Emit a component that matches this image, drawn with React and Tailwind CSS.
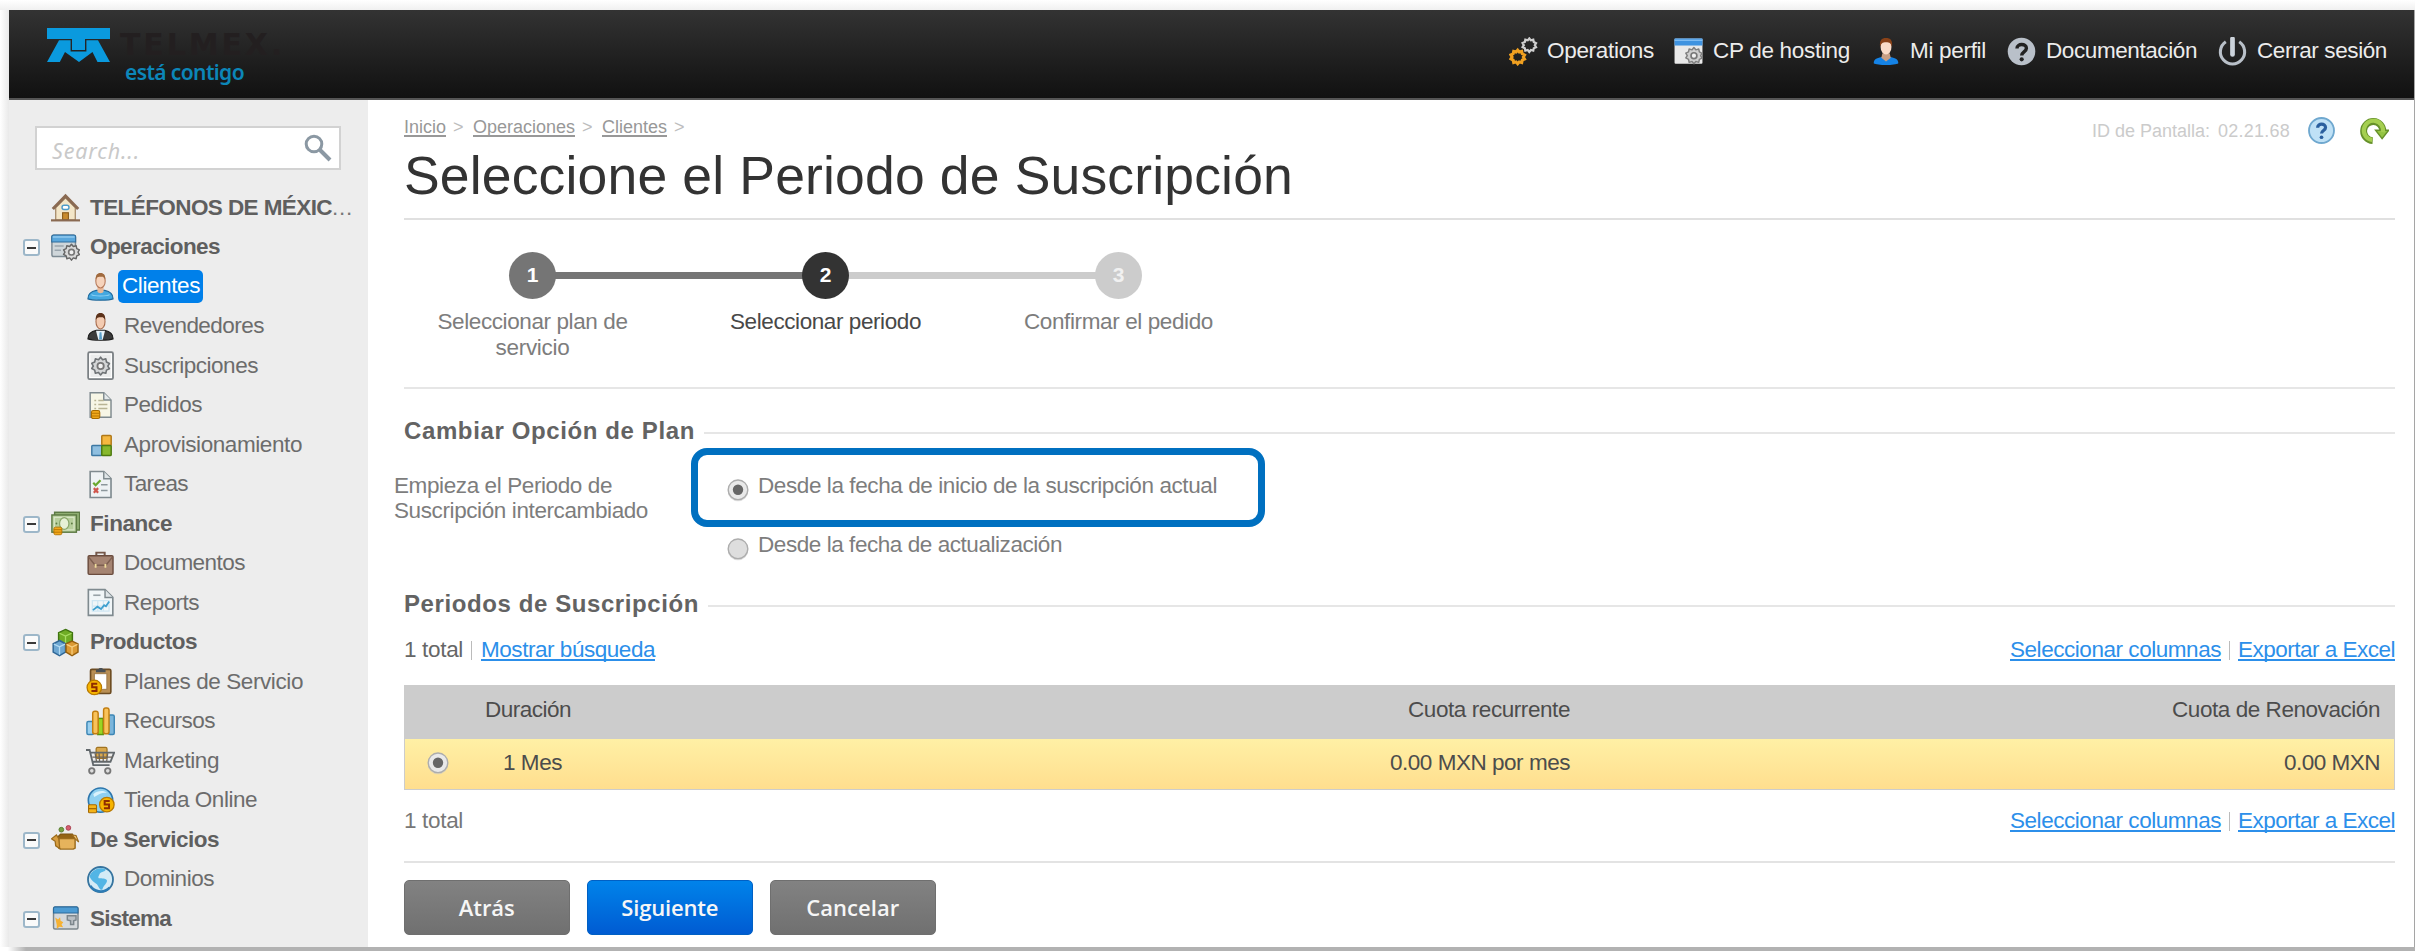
import React, { useLayoutEffect, useRef } from "react";

/* Text whose tracking is adjusted so that it fills the width of its box. */
function Fit({ className = "", inner = "", children }) {
  const box = useRef(null);
  const text = useRef(null);
  useLayoutEffect(() => {
    const el = text.current;
    el.style.letterSpacing = "0px";
    const natural = el.getBoundingClientRect().width;
    const target = box.current.getBoundingClientRect().width;
    el.style.letterSpacing = (target - natural) / children.length + "px";
  }, [children]);
  return (
    <span ref={box} className={"block shrink-0 whitespace-nowrap " + className}>
      <span ref={text} className={"inline-block " + inner}>{children}</span>
    </span>
  );
}

const Svg = ({ children, className = "size-[29px]" }) => (
  <svg viewBox="0 0 16 16" className={"block shrink-0 " + className} fill="none">{children}</svg>
);

const gearPath =
  "M0-3.9L.9-2.8 2.3-3.2 2.6-1.8 3.9-1.1 3.2 0 3.9 1.2 2.6 1.8 2.3 3.2 .9 2.8 0 3.9-.9 2.8-2.3 3.2-2.6 1.8-3.9 1.1-3.2 0-3.9-1.2-2.6-1.8-2.3-3.2-.9-2.8Z";

const Gear = ({ x, y, s = 1, fill = "#d9d9d9", stroke = "#666", hole = "#777", w = 0.7 }) => (
  <g transform={`translate(${x} ${y}) scale(${s})`}>
    <path d={gearPath} fill={fill} stroke={stroke} strokeWidth={w} strokeLinejoin="round" />
    <circle r="1.4" fill="#f1f1f1" stroke={hole} strokeWidth="0.8" />
  </g>
);

const Coin = ({ x, y, r = 4 }) => (
  <g>
    <circle cx={x} cy={y} r={r} fill="#f7b500" stroke="#b97a00" strokeWidth="0.7" />
    <path d={`M${x + 1.6} ${y - 2}h-2.8v1.9h2.4v2.1h-2.8`} stroke="#8f2c00" strokeWidth="1.1" />
  </g>
);

const icons = {
  house: (
    <Svg>
      <path d="M2.6 8v7h10.8V8L8 2.6Z" fill="#f3e6c8" stroke="#a58a68" strokeWidth="0.7" />
      <path d="M1 8.8 8 1.6l7 7.2" stroke="#8a6a52" strokeWidth="1.7" />
      <rect x="6.1" y="6.8" width="3.8" height="2.3" rx="1.1" fill="#fff" stroke="#4e9cc9" strokeWidth="0.8" />
      <rect x="6.4" y="10.9" width="3.2" height="3.8" fill="#c98b2d" stroke="#8a5a17" strokeWidth="0.6" />
      <path d="M0 15.1h16" stroke="#8a6a52" strokeWidth="1.2" />
    </Svg>
  ),
  operations: (
    <Svg>
      <rect x="0.5" y="1.2" width="13" height="11.8" rx="1" fill="#cfd6da" stroke="#7d8a93" strokeWidth="0.8" />
      <path d="M.4 5V2.1a1 1 0 0 1 1-1h11.2a1 1 0 0 1 1 1V5Z" fill="#5aa7dc" stroke="#2f6d9c" strokeWidth="0.6" />
      <path d="M1 2.2h12" stroke="#9bd0f3" strokeWidth="0.7" />
      <path d="M2 7.2h5M2 9.5h3.5" stroke="#9aa5ad" strokeWidth="0.9" />
      <Gear x="11.3" y="10.6" s="1.12" />
    </Svg>
  ),
  client: (
    <Svg>
      <path d="M1.1 14.8c0-3 1.6-4 4.6-4.6h4.6c3 .6 4.6 1.6 4.6 4.6-2 1-11.8 1-13.8 0Z" fill="#44a8e0" stroke="#20699c" strokeWidth="0.7" />
      <path d="M6.3 8v2.8c.5 1.2 2.9 1.2 3.4 0V8Z" fill="#eab998" />
      <ellipse cx="8" cy="4.9" rx="2.6" ry="3.9" fill="#f6d3bb" stroke="#b5795a" strokeWidth="0.6" />
      <path d="M5.4 4.2C5.2 1.6 6.2.5 8 .5s2.8 1.1 2.6 3.7C10 2.6 9 2.6 8 2.6s-2 0-2.6 1.6Z" fill="#a06a3e" />
      <path d="M3 12.5c1.5 1 8.5 1 10 0" stroke="#8fd2f5" strokeWidth="0.6" />
    </Svg>
  ),
  reseller: (
    <Svg>
      <path d="M1.1 14.8c0-3 1.6-4 4.6-4.6h4.6c3 .6 4.6 1.6 4.6 4.6-2 1-11.8 1-13.8 0Z" fill="#3b3b3b" stroke="#1c1c1c" strokeWidth="0.7" />
      <path d="M5.5 10.3 6.8 15.3h2.4L10.5 10.3Z" fill="#e8f2f8" />
      <path d="M7.5 11.2h1l.4 4h-1.7Z" fill="#5b9fc9" />
      <ellipse cx="8" cy="5.2" rx="2.5" ry="4.2" fill="#f3cbb1" stroke="#a66a4b" strokeWidth="0.6" />
      <path d="M5.4 4.5C5.2 1.6 6.2.5 8 .5s2.8 1.1 2.6 4C10 2.9 9 2.9 8 2.9s-2 0-2.6 1.6Z" fill="#5b3119" />
    </Svg>
  ),
  subscription: (
    <Svg>
      <rect x="1.2" y="0.7" width="13.7" height="14.8" rx="0.8" fill="#ebecec" stroke="#7b8084" strokeWidth="1" />
      <rect x="2.1" y="1.6" width="11.9" height="13" fill="none" stroke="#fff" strokeWidth="0.6" />
      <Gear x="8.05" y="8.3" s="1.25" fill="#d4d6d7" stroke="#6f7376" />
    </Svg>
  ),
  order: (
    <Svg>
      <path d="M2.3 1h7.5l4 4v9.5H2.3Z" fill="#f7f6e6" stroke="#7f8a8f" strokeWidth="0.8" />
      <path d="M9.8 1v4h4" fill="#e4e9eb" stroke="#7f8a8f" strokeWidth="0.8" />
      <path d="M4.6 5.2h1M4.6 7.5h1M4.6 9.7h1M6.8 5.2h3M6.8 7.5h5M6.8 9.7h5" stroke="#b8b494" strokeWidth="0.8" />
      <rect x="3" y="10.8" width="4.6" height="4.4" rx="1" fill="#f0a81c" stroke="#a66a00" strokeWidth="0.6" />
      <path d="M3 12.3h4.6M3 13.8h4.6" stroke="#b37400" strokeWidth="0.5" />
    </Svg>
  ),
  blocks: (
    <Svg>
      <rect x="8.7" y="3" width="5.2" height="5.6" rx="0.5" fill="#f5b840" stroke="#b07818" strokeWidth="0.8" />
      <rect x="3.2" y="8.5" width="5.5" height="5.6" rx="0.5" fill="#8fbfe0" stroke="#3d78a3" strokeWidth="0.8" />
      <rect x="8.7" y="8.5" width="5.2" height="5.6" rx="0.5" fill="#87b82d" stroke="#4d7a10" strokeWidth="0.8" />
    </Svg>
  ),
  tasks: (
    <Svg>
      <path d="M2.3.8h7.5l4 4v10.4H2.3Z" fill="#eef2f4" stroke="#7f8a8f" strokeWidth="0.9" />
      <path d="M9.8.8v4h4" fill="#dfe5e8" stroke="#7f8a8f" strokeWidth="0.8" />
      <path d="m4 7 1.3 1.4L8 5.6" stroke="#69a82c" strokeWidth="1.2" />
      <path d="m4.3 10 2.4 2.5m0-2.5-2.4 2.5" stroke="#d0564c" strokeWidth="1.2" />
      <path d="M8.3 8.1h3.6M8.3 11.3h3.6" stroke="#8c979c" strokeWidth="0.8" />
    </Svg>
  ),
  money: (
    <Svg>
      <rect x="2" y="1.8" width="13.8" height="9.8" fill="#8fae72" stroke="#5c7a43" strokeWidth="0.8" />
      <rect x="0.5" y="3.3" width="13.5" height="9.5" fill="#b7cf9c" stroke="#5c7a43" strokeWidth="0.8" />
      <rect x="1.8" y="4.6" width="10.9" height="6.9" fill="none" stroke="#dbe8cb" strokeWidth="0.6" />
      <ellipse cx="7.3" cy="8" rx="2.6" ry="3.3" fill="#e7f0d6" stroke="#8aa76c" strokeWidth="0.7" />
      <circle cx="3" cy="8" r="0.5" fill="#5c7a43" />
      <circle cx="11.5" cy="8" r="0.5" fill="#5c7a43" />
      <rect x="1.6" y="10" width="4.4" height="4.2" rx="0.9" fill="#f4a81a" stroke="#b37400" strokeWidth="0.5" />
      <path d="M1.6 11.4H6M1.6 12.8H6" stroke="#b37400" strokeWidth="0.5" />
    </Svg>
  ),
  briefcase: (
    <Svg>
      <path d="M5.7 4V2h4.6v2" stroke="#75584a" strokeWidth="1.1" />
      <rect x="1.2" y="3.7" width="13.7" height="10.3" rx="0.6" fill="#a58472" stroke="#6b4c3e" strokeWidth="0.8" />
      <path d="M1.5 4.5 5 9h6l3.5-4.5" stroke="#7d5f50" strokeWidth="0.8" />
      <path d="M5.3 8.3v2M10.7 8.3v2" stroke="#f0dc9b" strokeWidth="1" />
    </Svg>
  ),
  report: (
    <Svg>
      <path d="M1.3.9h9.2l4.3 4.3v9.9H1.3Z" fill="#f1f6f8" stroke="#7f8a8f" strokeWidth="0.9" />
      <path d="M10.5.9v4.3h4.3" fill="#dfe5e8" stroke="#7f8a8f" strokeWidth="0.8" />
      <path d="M4 4h4" stroke="#98a3a8" strokeWidth="0.9" />
      <path d="M3.5 7h9.2v5.8H3.5ZM6.5 7v5.8M9.6 7v5.8M3.5 10h9.2" stroke="#cfe6f2" strokeWidth="0.7" />
      <path d="m3.8 12.2 2.5-1.9 2 1.3L10 9.5l1 .6 1.8-2.7" stroke="#3fa0cf" strokeWidth="1" />
    </Svg>
  ),
  products: (
    <Svg>
      <path d="m8 .8 3.8 1.8v4.6L8 9 4.2 7.2V2.6Z" fill="#6fac25" stroke="#3f7410" strokeWidth="0.8" />
      <path d="m4.7 2.9 3.3 1.5 3.3-1.5M8 4.4V8.5" stroke="#a8dd63" strokeWidth="0.7" />
      <path d="m4.7 6.9 3.3 1.8v4.6l-3.3 2-3.5-2V8.7Z" fill="#6da7d2" stroke="#2f6797" strokeWidth="0.8" />
      <path d="m1.6 8.9 3.1 1.5 3-1.5M4.7 10.4v4.4" stroke="#b2daf2" strokeWidth="0.7" />
      <path d="m11.6 7.2 3.3 1.6v4.5l-3.3 2L8.3 13.3V8.8Z" fill="#dc9a34" stroke="#96600f" strokeWidth="0.8" />
      <path d="m8.6 9 3 1.5 3-1.5M11.6 10.5v4.3" stroke="#f8cf80" strokeWidth="0.7" />
    </Svg>
  ),
  plans: (
    <Svg>
      <rect x="2.5" y="1.3" width="11.2" height="13.3" rx="0.8" fill="#b98f55" stroke="#6d4c22" strokeWidth="0.9" />
      <rect x="4.6" y="3.7" width="6.9" height="8.6" fill="#fff" stroke="#9c7746" strokeWidth="0.5" />
      <path d="M5.5 2.9V1.4h1.4C7 .3 9.3.3 9.4 1.4h1.4v1.5Z" fill="#4a5055" />
      <Coin x={4.6} y={11.3} />
    </Svg>
  ),
  resources: (
    <Svg>
      <rect x="0.5" y="8" width="3.7" height="7.2" rx="0.8" fill="#9bd0ef" stroke="#3d86b5" strokeWidth="0.8" />
      <rect x="6.5" y="6.3" width="3" height="8.9" fill="#9bd522" stroke="#5b9410" strokeWidth="0.8" />
      <rect x="12.4" y="4.4" width="3.2" height="10.8" rx="0.8" fill="#7bb5db" stroke="#3d86b5" strokeWidth="0.8" />
      <rect x="3.7" y="2.3" width="3" height="12.5" rx="1.2" fill="#f9c25a" stroke="#c27e10" strokeWidth="0.8" />
      <rect x="9.7" y="0.6" width="3" height="14.2" rx="1.2" fill="#f9c25a" stroke="#c27e10" strokeWidth="0.8" />
    </Svg>
  ),
  cart: (
    <Svg>
      <rect x="5.6" y="0.8" width="6" height="6" rx="0.8" fill="#d9a84c" stroke="#a17320" strokeWidth="0.7" />
      <path d="M0 2.2h2l2 8.3h9M2.7 3.7h12.8l-2 5H4" stroke="#62686c" strokeWidth="1" />
      <path d="M5 4l.8 4.5M7.2 4l.3 4.5M9.5 4v4.5M12 4l-.6 4.5M3.5 6.2h11" stroke="#6e655a" strokeWidth="0.7" />
      <circle cx="3.2" cy="13.7" r="1.5" fill="#ddd" stroke="#777" strokeWidth="1" />
      <circle cx="12" cy="13.7" r="1.5" fill="#ddd" stroke="#777" strokeWidth="1" />
    </Svg>
  ),
  store: (
    <Svg>
      <circle cx="8" cy="7.8" r="6.7" fill="#8fd0f0" stroke="#2c76ad" strokeWidth="0.9" />
      <path d="M4 4.500c2-2 6-2.300 7.500-.8-3-.3-4.500 1-7 2.300Z" fill="#d9f2fc" />
      <rect x="1.4" y="10.3" width="4.4" height="4.5" rx="0.6" fill="#f4b41a" stroke="#a66a00" strokeWidth="0.6" />
      <path d="M1.4 12.5h4.4" stroke="#a66a00" strokeWidth="0.7" />
      <Coin x={11.5} y={10.3} />
    </Svg>
  ),
  services: (
    <Svg>
      <circle cx="5.7" cy="2.6" r="1.3" fill="#76a044" stroke="#55792b" strokeWidth="0.5" />
      <circle cx="9.6" cy="1.6" r="1.3" fill="#d65f70" stroke="#a83e4e" strokeWidth="0.5" />
      <path d="M2.8 7.5 5.3 5h6.5l1.4 2.5Z" fill="#946416" stroke="#7a5210" strokeWidth="0.6" />
      <path d="M4.3 7.5h9v5.2l-1 .6h-7l-1-.6Z" fill="#e6b35c" stroke="#9c6c1c" strokeWidth="0.8" />
      <path d="M4.3 7.5 3 5.5.3 7.6l2 1.4.3 2.5 2.2 1.5Z" fill="#d79e41" stroke="#9c6c1c" strokeWidth="0.7" />
      <path d="m13.3 7.5-1.5-2 2 .3 1.5 3.6Z" fill="#f0c578" stroke="#9c6c1c" strokeWidth="0.6" />
    </Svg>
  ),
  globe: (
    <Svg>
      <circle cx="8" cy="8" r="6.9" fill="#d4ebf6" stroke="#36749f" strokeWidth="1" />
      <path d="M2 6.5C2.5 4 5 2 8 1.8c1 0 2.5.3 3 .8-1 1.4-3 1-3.5 2.4-.5 1.3-1 1.5-.5 2.3 1 .2 3-.3 4.5 1 .5 1.8-2 3-2.5 5.3-1.5.5-2-1.8-3-3C4.5 9.6 3 8.5 2 6.5Z" fill="#52b5e5" />
      <path d="M2.5 11.5c1.5 3 7 4.500 10.500 1" stroke="#2d7cb5" strokeWidth="1.3" />
    </Svg>
  ),
  system: (
    <Svg>
      <rect x="1.4" y="1.8" width="13.5" height="12" rx="0.8" fill="#d5d9dc" stroke="#7c868c" strokeWidth="0.8" />
      <path d="M1.4 5V2.4a.8.8 0 0 1 .8-.8h11.9a.8.8 0 0 1 .8.8V5Z" fill="#4c9bd3" stroke="#2a6b9c" strokeWidth="0.6" />
      <path d="m2.3 7.5 1.6 1L5 7.3l.3 2 1.5.8-1 1.2.9 1.5-2-.2-1.5 1v-2Z" fill="#f5b133" />
      <path d="M9 6.5h4.8v2.3l-1.3.5v2h-1.7v-2L9 8.8Z" fill="#b9bfc4" stroke="#7c868c" strokeWidth="0.8" />
    </Svg>
  ),
};

const tree = [
  { icon: "house", label: "TELÉFONOS DE MÉXIC", w: "w-[242px]", root: true },
  { icon: "operations", label: "Operaciones", w: "w-[130px]", group: true },
  { icon: "client", label: "Clientes", w: "w-[78px]", active: true },
  { icon: "reseller", label: "Revendedores", w: "w-[140px]" },
  { icon: "subscription", label: "Suscripciones", w: "w-[134px]" },
  { icon: "order", label: "Pedidos", w: "w-[78px]" },
  { icon: "blocks", label: "Aprovisionamiento", w: "w-[178px]" },
  { icon: "tasks", label: "Tareas", w: "w-[64px]" },
  { icon: "money", label: "Finance", w: "w-[82px]", group: true },
  { icon: "briefcase", label: "Documentos", w: "w-[121px]" },
  { icon: "report", label: "Reports", w: "w-[75px]" },
  { icon: "products", label: "Productos", w: "w-[107px]", group: true },
  { icon: "plans", label: "Planes de Servicio", w: "w-[179px]" },
  { icon: "resources", label: "Recursos", w: "w-[91px]" },
  { icon: "cart", label: "Marketing", w: "w-[95px]" },
  { icon: "store", label: "Tienda Online", w: "w-[133px]" },
  { icon: "services", label: "De Servicios", w: "w-[129px]", group: true },
  { icon: "globe", label: "Dominios", w: "w-[90px]" },
  { icon: "system", label: "Sistema", w: "w-[81px]", group: true },
];

const Toggle = () => (
  <span className="ml-[14px] mt-[1px] flex size-[17px] shrink-0 items-center justify-center rounded-[3px] border-2 border-[#9db7c9] bg-[#fafafa]">
    <span className="h-[2px] w-[9px] bg-[#3a3a3a]" />
  </span>
);

function TreeRow({ item }) {
  const top = item.root || item.group;
  return (
    <li className="flex h-[39.5px] items-center">
      {item.group && <Toggle />}
      <span className={item.group ? "ml-[11px]" : item.root ? "ml-[42px]" : "ml-[77px]"}>{icons[item.icon]}</span>
      {item.active ? (
        <span className="ml-[3px] flex h-[33px] items-center rounded-[5px] bg-[#0080ea] pb-[1px] pl-[4px] pr-[3px] text-white">
          <Fit className={item.w}>{item.label}</Fit>
        </span>
      ) : (
        <Fit className={item.w + (top ? " ml-[10px] font-bold text-[#5f5f5f]" : " ml-[9px] text-[#6c6c6c]")}>{item.label}</Fit>
      )}
      {item.root && <Fit className="w-[21px] text-[#777]">...</Fit>}
    </li>
  );
}

const Logo = () => (
  <svg viewBox="0 0 63 34" className="h-[34px] w-[63px]" fill="#0a9ade">
    <path d="M0 0h63v11H38V22H25V11H0Z" />
    <path d="M12 12.200h11.600V23.500h15.800V12.200h11.600L63 34H50.500L45.500 24 32 34 18 24 12.800 34H0Z" />
  </svg>
);

const navIcons = {
  gears: (
    <Svg>
      <g transform="translate(4.8 11) scale(0.97)">
        <path d={gearPath} fill="none" stroke="#f0a020" strokeWidth="1.7" />
      </g>
      <g transform="translate(11.2 4.5) scale(0.95)">
        <path d={gearPath} fill="none" stroke="#cfcfcf" strokeWidth="1.3" />
      </g>
    </Svg>
  ),
  panel: (
    <Svg>
      <rect x="0.3" y="0.8" width="15.4" height="14" rx="0.6" fill="#e9e9e9" />
      <rect x="0.3" y="0.8" width="15.4" height="3.9" fill="#3f93e0" />
      <path d="M.3 1.8h15.4" stroke="#7fbdf3" strokeWidth="0.8" />
      <Gear x="11" y="10.3" s="1.15" fill="#cfcfcf" stroke="#808080" />
    </Svg>
  ),
  user: (
    <Svg>
      <path d="M1.5 14.5c0-2.5 2-3 4.7-3.5h4.2c2.7.5 4.7 1 4.7 3.5-2 1.3-11.6 1.3-13.6 0Z" fill="#1583e6" />
      <path d="M6.3 9h4l.6 2.5-2.6 2-2.6-2Z" fill="#c99f84" />
      <ellipse cx="8.3" cy="5.4" rx="3" ry="4.3" fill="#fbdcc8" />
      <path d="M5 5.5C4.6 1.8 5.8.5 8.3.5s3.7 1.3 3.3 5c-.5-2-1.3-2.6-3.3-2.6s-2.8.6-3.3 2.6Z" fill="#8a4218" />
    </Svg>
  ),
  help: (
    <Svg>
      <circle cx="8" cy="8" r="7.6" fill="#b9c0c9" />
      <path d="M5.5 6.3C5.5 3.5 10.7 3.4 10.7 6.2c0 2-2.6 2-2.6 4" stroke="#222" strokeWidth="1.9" />
      <circle cx="8.1" cy="12.3" r="1.15" fill="#222" />
    </Svg>
  ),
  power: (
    <Svg>
      <path d="M4.3 2.6A6.7 6.7 0 1 0 11.7 2.6" stroke="#b9c0c9" strokeWidth="1.7" />
      <path d="M8 1v8.6" stroke="#ccd3db" strokeWidth="2.6" strokeLinecap="round" />
    </Svg>
  ),
};

const nav = [
  { icon: "gears", label: "Operations", w: "w-[107px]", gap: "ml-[9px]", end: "mr-[20px]" },
  { icon: "panel", label: "CP de hosting", w: "w-[137px]", gap: "ml-[10px]", end: "mr-[21px]" },
  { icon: "user", label: "Mi perfil", w: "w-[76px]", gap: "ml-[10px]", end: "mr-[21px]" },
  { icon: "help", label: "Documentación", w: "w-[151px]", gap: "ml-[10px]", end: "mr-[21px]" },
  { icon: "power", label: "Cerrar sesión", w: "w-[130px]", gap: "ml-[10px]", end: "mr-[27px]" },
];

const linkLine = "underline decoration-2 underline-offset-[2px] [text-decoration-skip-ink:none]";

const Radio = ({ checked }) => (
  <svg viewBox="0 0 24 24" className="block size-[24px] shrink-0">
    <circle cx="12" cy="13" r="10.3" fill="#c8c8c8" opacity="0.6" />
    <circle cx="12" cy="11.8" r="9.8" fill={checked ? "#e9e9e9" : "#dedede"} stroke="#adadad" strokeWidth="1.4" />
    {checked && <circle cx="12" cy="11.8" r="5.2" fill="#666" />}
  </svg>
);

const TableLinks = () => (
  <div className="flex items-center text-[#2c8fea]">
    <Fit className="w-[211px]" inner={linkLine}>Seleccionar columnas</Fit>
    <span className="mx-[8px] h-[19px] w-px bg-[#bbb]" />
    <Fit className="w-[157px]" inner={linkLine}>Exportar a Excel</Fit>
  </div>
);

const Heading = ({ children, w }) => (
  <div className="flex h-[30px] items-center text-[24px] font-bold text-[#636363]">
    <Fit className={"-mt-[3px] " + w}>{children}</Fit>
    <span className="ml-[9px] mt-[1px] h-[2px] flex-1 bg-[#e6e6e6]" />
  </div>
);

const Button = ({ children, w, primary }) => (
  <button
    className={
      "flex h-[55px] w-[165.5px] items-center justify-center rounded-[5px] border pb-[2px] font-['Open_Sans',sans-serif] text-[22px] font-semibold text-[#f6f6f6] " +
      (primary ? "border-[#0060c4] bg-linear-to-b from-[#0083ea] to-[#005bd2]" : "border-[#6f6f6f] bg-linear-to-b from-[#828282] to-[#707070]")
    }
  >
    <Fit className={w}>{children}</Fit>
  </button>
);

const Step = ({ n, circle, label }) => (
  <div className="flex w-[293px] flex-col items-center">
    <span className={"flex size-[47px] items-center justify-center rounded-full pb-[1px] text-[21px] font-bold " + circle}>{n}</span>
    <div className={"mt-[10px] flex flex-col items-center leading-[25.5px] " + label.color}>
      {label.lines.map((l) => (
        <Fit key={l.text} className={l.w}>{l.text}</Fit>
      ))}
    </div>
  </div>
);

export default function App() {
  return (
    <div className="flex h-[951px] w-[2415px] flex-col overflow-hidden bg-white font-['Liberation_Sans',Arial,sans-serif] text-[22.5px] leading-[26px]">
      <div className="h-[10px] shrink-0 bg-linear-to-b from-white to-[#f0f0f0]" />
      <div className="flex h-[937px] shrink-0">
        <div className="w-[9px] shrink-0 bg-linear-to-r from-white to-[#e9e9e9]" />
        <div className="w-[2405px] shrink-0">
          <header className="flex h-[90px] items-start justify-between border-b-2 border-[#555] bg-linear-to-b from-[#333] to-[#111]">
            <div className="flex pl-[38px] pt-[18px]">
              <Logo />
              <div className="ml-[10px] pt-[2px]">
                <Fit className="w-[165px] font-['DejaVu_Sans',sans-serif] text-[30px] font-bold leading-[30px] text-[#231f20]">TELMEX.</Fit>
                <Fit className="ml-[5px] w-[119px] font-['Noto_Sans',sans-serif] text-[21px] font-semibold leading-[25px] text-[#0c86b8]">está contigo</Fit>
              </div>
            </div>
            <nav className="flex h-[82px] items-center text-[#ececec]">
              {nav.map((n) => (
                <a key={n.label} className={"flex items-center " + n.end}>
                  {navIcons[n.icon]}
                  <Fit className={"-mt-[1px] " + n.w + " " + n.gap}>{n.label}</Fit>
                </a>
              ))}
            </nav>
          </header>

          <div className="flex h-[847px]">
            <aside className="w-[359px] shrink-0 bg-[#ededed]">
              <div className="ml-[26px] mt-[26px] flex h-[44px] w-[306px] items-center justify-between border-2 border-[#d2d2d2] bg-white pl-[15px] pr-[7px]">
                <Fit className="mt-[5px] w-[88px] font-['Noto_Sans',sans-serif] text-[21.5px] italic text-[#c9c9c9]">Search...</Fit>
                <svg viewBox="0 0 28 28" className="size-[28px]" fill="none">
                  <circle cx="10" cy="10" r="7.8" stroke="#8b98a3" strokeWidth="3" />
                  <path d="m16 16 10 10" stroke="#8b98a3" strokeWidth="4" />
                </svg>
              </div>
              <ul className="mt-[18px]">
                {tree.map((t) => (
                  <TreeRow key={t.label} item={t} />
                ))}
              </ul>
            </aside>

            <main className="flex flex-1 flex-col pl-[36px] pr-[19px]">
              <div className="flex h-[52px] items-center justify-between text-[18px] text-[#989898]">
                <div className="flex items-center gap-[7px] pt-[1px]">
                  <Fit className="w-[42px]" inner={linkLine}>Inicio</Fit>
                  <Fit className="w-[13px] text-[#bdbdbd]">&gt;</Fit>
                  <Fit className="w-[102px]" inner={linkLine}>Operaciones</Fit>
                  <Fit className="w-[13px] text-[#bdbdbd]">&gt;</Fit>
                  <Fit className="w-[65px]" inner={linkLine}>Clientes</Fit>
                  <Fit className="w-[12px] text-[#bdbdbd]">&gt;</Fit>
                </div>
                <div className="flex items-center pr-[6px] pt-[9px] text-[#cbcbcb]">
                  <Fit className="w-[118px]">ID de Pantalla:</Fit>
                  <Fit className="ml-[8px] w-[72px]">02.21.68</Fit>
                  <Svg className="ml-[18px] size-[27px]">
                    <circle cx="8" cy="8" r="7.4" fill="#bfe1f6" stroke="#6fa8cf" strokeWidth="1.1" />
                    <path d="M5.7 6.3C5.7 3.5 10.4 3.5 10.4 6.2c0 1.8-2.4 1.8-2.4 3.6" stroke="#2a5f9e" strokeWidth="1.9" />
                    <circle cx="8" cy="12" r="1.1" fill="#2a5f9e" />
                  </Svg>
                  <Svg className="ml-[25px] size-[29px]">
                    <path d="M7 13.6A5.3 5.3 0 1 1 12.6 8.5" stroke="#66912a" strokeWidth="3.8" />
                    <path d="M8.600 7.900h7.200l-3.600 4.600Z" fill="#94c442" stroke="#66912a" strokeWidth="0.8" />
                    <path d="M6.700 13.200A5.300 5.300 0 1 1 12.600 8.900" stroke="#a5cf50" strokeWidth="2.300" />
                  </Svg>
                </div>
              </div>
              <h1 className="h-[66px] text-[53.5px] leading-[47px] text-[#333]">
                <Fit className="w-[889px]">Seleccione el Periodo de Suscripción</Fit>
              </h1>
              <div className="h-[2px] shrink-0 bg-[#e0e0e0]" />

              <div className="grid h-[167px] shrink-0 grid-cols-1 pt-[32px]">
                <div className="col-start-1 row-start-1 ml-[129px] mt-[20px] flex">
                  <span className="h-[7px] w-[293px] bg-[#757575]" />
                  <span className="h-[7px] w-[293px] bg-[#ccc]" />
                </div>
                <div className="col-start-1 row-start-1 ml-[-18px] flex">
                  <Step
                    n="1"
                    circle="bg-[#757575] text-white"
                    label={{ color: "text-[#7d7d7d]", lines: [{ text: "Seleccionar plan de", w: "w-[190px]" }, { text: "servicio", w: "w-[74px]" }] }}
                  />
                  <Step
                    n="2"
                    circle="bg-[#333] text-white"
                    label={{ color: "text-[#484848]", lines: [{ text: "Seleccionar periodo", w: "w-[191px]" }] }}
                  />
                  <Step
                    n="3"
                    circle="bg-[#ccc] text-[#f1f1f1]"
                    label={{ color: "text-[#7d7d7d]", lines: [{ text: "Confirmar el pedido", w: "w-[189px]" }] }}
                  />
                </div>
              </div>
              <div className="h-[2px] shrink-0 bg-[#e6e6e6]" />

              <div className="mt-[28px]">
                <Heading w="w-[291px]">Cambiar Opción de Plan</Heading>
              </div>
              <div className="relative flex h-[143px] shrink-0 text-[#7d7d7d]">
                <div className="ml-[-10px] mt-[26px] w-[332px] leading-[25px]">
                  <Fit className="w-[218px]">Empieza el Periodo de</Fit>
                  <Fit className="w-[254px]">Suscripción intercambiado</Fit>
                </div>
                <div className="mt-[26px] flex flex-col gap-[33px]">
                  <label className="flex h-[26px] items-center">
                    <span className="mt-[7px]"><Radio checked /></span>
                    <Fit className="ml-[8px] w-[459px]">Desde la fecha de inicio de la suscripción actual</Fit>
                  </label>
                  <label className="flex h-[26px] items-center">
                    <span className="mt-[7px]"><Radio /></span>
                    <Fit className="ml-[8px] w-[304px]">Desde la fecha de actualización</Fit>
                  </label>
                </div>
                <div className="absolute left-[287px] top-px h-[79px] w-[574px] rounded-[16px] border-[7px] border-[#0070c0]" />
              </div>
              <Heading w="w-[295px]">Periodos de Suscripción</Heading>
              <div className="mt-[17px] flex h-[26px] items-center justify-between text-[#666]">
                <div className="flex items-center">
                  <Fit className="w-[59px]">1 total</Fit>
                  <span className="ml-[8px] mr-[9px] h-[19px] w-px bg-[#bbb]" />
                  <Fit className="w-[174px] text-[#2c8fea]" inner={linkLine}>Mostrar búsqueda</Fit>
                </div>
                <TableLinks />
              </div>

              <div className="mt-[22px] h-[105px] shrink-0 border border-[#ccc] text-[#4c4c4c]">
                <div className="flex h-[53px] items-center bg-[#ccc] pb-[5px]">
                  <Fit className="ml-[80px] w-[86px]">Duración</Fit>
                  <div className="flex w-[999px] justify-end"><Fit className="w-[162px]">Cuota recurrente</Fit></div>
                  <div className="flex flex-1 justify-end pr-[14px]"><Fit className="w-[208px]">Cuota de Renovación</Fit></div>
                </div>
                <div className="flex h-[50px] items-center bg-linear-to-b from-[#fff0a5] to-[#ffde8e] pb-[3px]">
                  <span className="ml-[21px] flex w-[77px]"><Radio checked /></span>
                  <Fit className="w-[59px]">1 Mes</Fit>
                  <div className="flex w-[1008px] justify-end"><Fit className="w-[180px]">0.00 MXN por mes</Fit></div>
                  <div className="flex flex-1 justify-end pr-[14px]"><Fit className="w-[96px]">0.00 MXN</Fit></div>
                </div>
              </div>

              <div className="mt-[18px] flex h-[26px] items-center justify-between text-[#777]">
                <Fit className="w-[59px]">1 total</Fit>
                <TableLinks />
              </div>
              <div className="mt-[27px] h-[2px] shrink-0 bg-[#e3e3e3]" />
              <div className="mt-[17px] flex gap-[17.5px]">
                <Button w="w-[56px]">Atrás</Button>
                <Button w="w-[97px]" primary>Siguiente</Button>
                <Button w="w-[93px]">Cancelar</Button>
              </div>
            </main>
          </div>
        </div>
        <div className="w-px bg-[#a5a5a5]" />
      </div>
      <div className="flex h-[4px] shrink-0">
        <div className="w-[26px] bg-linear-to-r from-white from-30% to-[#b2b2b2]" />
        <div className="flex-1 bg-[#b2b2b2]" />
      </div>
    </div>
  );
}
